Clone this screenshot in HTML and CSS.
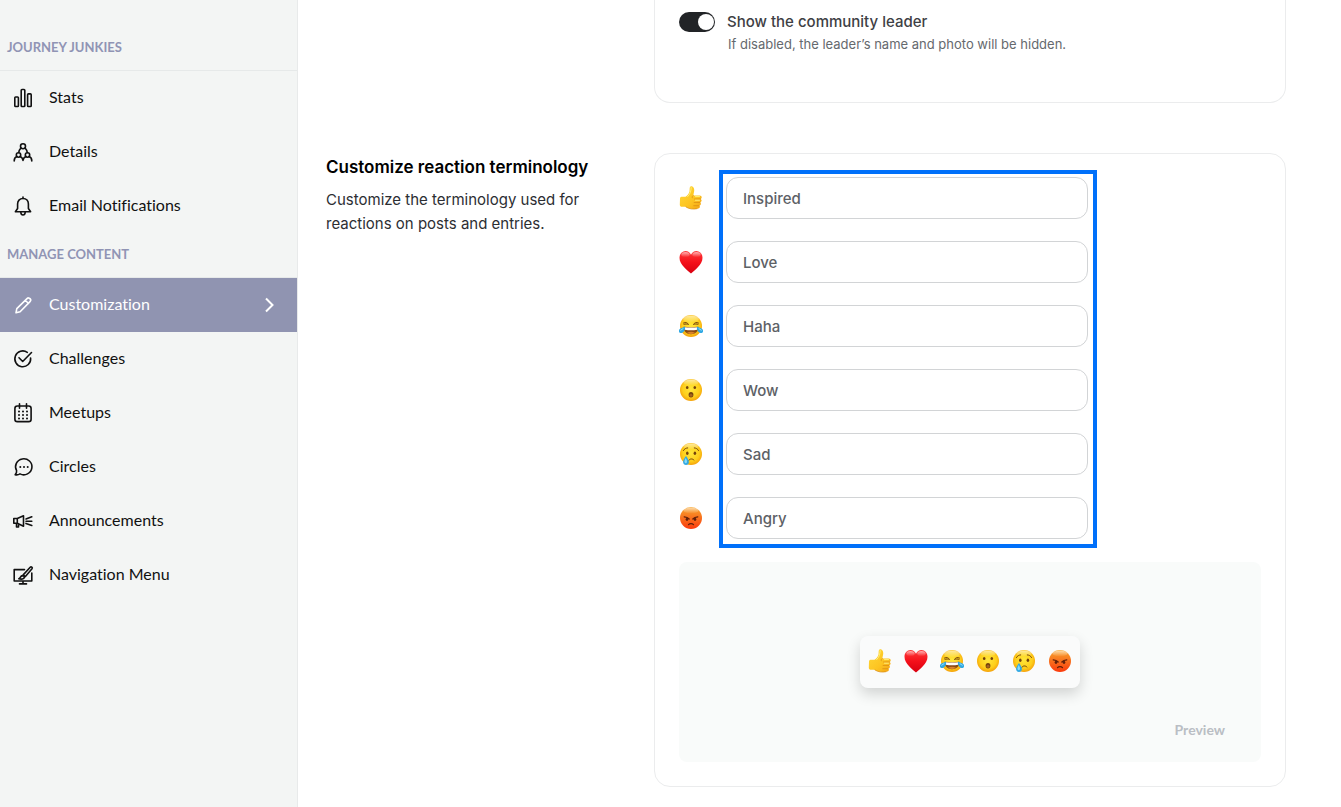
FILE: index.html
```html
<!DOCTYPE html>
<html lang="en">
<head>
<meta charset="utf-8">
<meta name="viewport" content="width=device-width, initial-scale=1">
<title>Customization</title>
<link rel="stylesheet" href="styles.css">
</head>
<body>
<svg class="sprite" aria-hidden="true">
  <defs>
    <radialGradient id="face" cx=".5" cy=".45" r=".58"><stop offset="0" stop-color="#ffe63c"/><stop offset=".65" stop-color="#fecf1b"/><stop offset="1" stop-color="#f39a08"/></radialGradient>
    <linearGradient id="gloss" x2="0" y2="1"><stop offset="0" stop-color="#fff" stop-opacity=".6"/><stop offset="1" stop-color="#fff" stop-opacity="0"/></linearGradient>
    <linearGradient id="mad" x2="0" y2="1"><stop offset="0" stop-color="#f8a62c"/><stop offset=".5" stop-color="#f8701e"/><stop offset="1" stop-color="#fb3a0c"/></linearGradient>
    <linearGradient id="hand" x2="1" y2="1"><stop offset="0" stop-color="#ffd93b"/><stop offset=".6" stop-color="#fdc421"/><stop offset="1" stop-color="#f3a316"/></linearGradient>
    <linearGradient id="red" x2="0" y2="1"><stop offset="0" stop-color="#ff3b3b"/><stop offset=".5" stop-color="#f4101a"/><stop offset="1" stop-color="#d80010"/></linearGradient>
  </defs>
  <symbol id="like" viewBox="0 0 24 24">
    <path fill="url(#hand)" d="M1 12.500C1 11.200 2 10.800 3.500 10.800h3C8.500 9.700 10 7.600 10.500 5.500L10.700 2C10.900.2 12.200-.2 13.400.4c1.900 1 2.100 3.700 1.600 5.600l-.7 3.500h6.300c2.500 0 2.700 2.800 1 3.500 1.500.7 1.300 3-.4 3.400 1.200.8.800 2.800-.7 3.200.8 1 .2 2.600-1.200 2.900-3.600.8-7.500.9-10.500-.5L6.500 20.800H3.300C1.500 20.800.8 20 .8 18.500z"/>
    <path fill="none" stroke="#d98b12" stroke-width=".7" stroke-linecap="round" d="M14.300 9.500c-1 .3-1.500 1.500-.9 2.400M15.500 13h6M15.200 16.500h5.600M14.800 19.700h5M7 21c3 2 7 2.600 11 1.700"/>
    <path fill="none" stroke="#ffef7a" stroke-width="1" stroke-linecap="round" d="M12.200 1.600c-.2 3-.6 6.200-3.500 9M16.500 10.600h4M16.500 14.200h4"/>
  </symbol>
  <symbol id="love" viewBox="0 0 24 24">
    <path fill="url(#red)" d="M12 23.500C8.500 20 .5 15 .5 7.700.5 4 3 1 6.500 1 9 1 11 2.500 12 4.800 13 2.500 15 1 17.500 1 21 1 23.500 4 23.500 7.700 23.500 15 15.500 20 12 23.500z"/>
    <ellipse cx="6.500" cy="4.600" rx="4.200" ry="2.600" fill="url(#gloss)"/><ellipse cx="17.500" cy="4.600" rx="4.200" ry="2.600" fill="url(#gloss)"/>
  </symbol>
  <symbol id="haha" viewBox="0 0 24 24">
    <circle cx="12" cy="12" r="11" fill="url(#face)"/><ellipse cx="12" cy="5" rx="8" ry="3.500" fill="url(#gloss)"/>
    <path fill="none" stroke="#76450d" stroke-width="1" stroke-linecap="round" stroke-linejoin="round" d="M4.500 9c2-1 4-.5 5 1.500-1.500-.6-3-.6-4.500-.2M19.500 9c-2-1-4-.5-5 1.500 1.500-.6 3-.6 4.500-.2"/>
    <path fill="#8a4a12" d="M4.500 12.800c5 .6 10 .6 15 0 0 4.800-3.200 7.400-7.500 7.400s-7.500-2.600-7.500-7.400z"/>
    <path fill="#fff" d="M5.400 13.200c4.500.5 8.700.5 13.200 0l-.5 2.600c-4 .7-8.200.7-12.200 0z"/>
    <path fill="#d9822b" d="M8 18.700c2.500-1.200 5.500-1.200 8 0-2.400 1.700-5.600 1.700-8 0z"/>
    <path fill="#32a9e4" d="M6 12.500c.6 3-1.200 6.500-4 6.500-2.400 0-2.700-2.700-1.200-4C2 13.900 4 13.700 6 12.500zM18 12.500c-.6 3 1.200 6.500 4 6.500 2.400 0 2.700-2.700 1.200-4-1.200-1.100-3.200-1.300-5.200-2.500z"/>
    <path fill="none" stroke="#94e0fb" stroke-width="1" stroke-linecap="round" d="M1.700 16.200l2.300-1.500M22.300 16.200L20 14.700"/>
  </symbol>
  <symbol id="wow" viewBox="0 0 24 24">
    <circle cx="12" cy="12" r="11" fill="url(#face)"/><ellipse cx="12" cy="4.500" rx="7.500" ry="3" fill="url(#gloss)"/>
    <g fill="#75430c"><ellipse cx="8.200" cy="9.500" rx="1.300" ry="1.600"/><ellipse cx="15.800" cy="9.500" rx="1.300" ry="1.600"/><ellipse cx="12" cy="16.800" rx="2.400" ry="2.700"/></g>
    <ellipse cx="12" cy="17.300" rx="1.500" ry="1.500" fill="#a5621d"/>
  </symbol>
  <symbol id="sad" viewBox="0 0 24 24">
    <circle cx="12" cy="12" r="11" fill="url(#face)"/><ellipse cx="12" cy="4.500" rx="7.500" ry="3" fill="url(#gloss)"/>
    <g fill="#75430c"><ellipse cx="8.300" cy="11.200" rx="1.300" ry="1.700"/><ellipse cx="15.900" cy="11.200" rx="1.300" ry="1.700"/></g>
    <path fill="none" stroke="#75430c" stroke-width="1" stroke-linecap="round" d="M4.500 8.500c1-1.800 2.500-2.500 4.200-2.600M19.500 8.500c-1-1.800-2.500-2.500-4.200-2.600M9.800 18.300c1.200-1.800 3.700-1.900 5.200-.2"/>
    <path fill="#32a9e4" d="M7 14c1.500 2.200 2.900 4.200 2.900 6 0 1.900-1.300 3-2.900 3s-2.900-1.100-2.900-3c0-1.800 1.300-3.800 2.900-6z"/>
    <path fill="#8adcf8" d="M6.800 16c.8 1.400 1.200 2.600 1.200 3.600 0 1-.6 1.600-1.200 1.600s-1.300-.6-1.300-1.600c0-1 .5-2.200 1.300-3.600z"/>
  </symbol>
  <symbol id="angry" viewBox="0 0 24 24">
    <circle cx="12" cy="12" r="11" fill="url(#mad)"/><ellipse cx="12" cy="4.500" rx="7.500" ry="3" fill="url(#gloss)"/>
    <g fill="#62200a"><ellipse cx="8" cy="13.300" rx="1.300" ry="1.600"/><ellipse cx="16" cy="13.300" rx="1.300" ry="1.600"/></g>
    <path fill="none" stroke="#62200a" stroke-width="1.200" stroke-linecap="round" d="M5.200 10.800c1.700.1 3.800.8 5 2.200M18.800 10.800c-1.700.1-3.800.8-5 2.200M9.500 18.700c1.200-1.400 3.800-1.400 5 0"/>
  </symbol>
</svg>

<div class="app">
  <aside class="sidebar">
    <nav>
      <h2 class="nav-title nav-title-first">JOURNEY JUNKIES</h2>
      <a class="nav-item" href="#stats"><svg class="icon" viewBox="0 0 20 20"><rect x="1.800" y="9" width="3.600" height="9.500" rx=".8"/><rect x="8.200" y="1.500" width="3.600" height="17" rx=".8"/><rect x="14.600" y="5.900" width="3.600" height="12.600" rx=".8"/></svg><span class="nav-label">Stats</span></a>
      <a class="nav-item" href="#details"><svg class="icon" viewBox="0 0 20 20"><circle cx="10" cy="4.200" r="2.500"/><circle cx="5.500" cy="13" r="2.200"/><circle cx="14.500" cy="13" r="2.200"/><path d="M7.900 6Q6 8 5.700 10.500M12.100 6Q14 8 14.300 10.500M1.200 19c0-2.600 1.200-4 2.800-4.500M7 14.500c1.700.5 2.800 2 3 4 .2-2 1.300-3.500 3-4M16 14.500c1.600.5 2.800 1.900 2.800 4.500"/></svg><span class="nav-label">Details</span></a>
      <a class="nav-item" href="#email"><svg class="icon" viewBox="0 0 20 20"><path d="M10 1v1.500M10 2.500C6.500 2.500 4.600 5 4.600 8v4.500L2.400 15.800h15.200l-2.200-3.300V8c0-3-1.900-5.500-5.400-5.500zM7.800 16.500c.2 1.700 1 2.500 2.200 2.500s2-.8 2.200-2.500"/></svg><span class="nav-label">Email Notifications</span></a>
      <h2 class="nav-title">MANAGE CONTENT</h2>
      <a class="nav-item nav-item-active" href="#customization" aria-current="page"><svg class="icon" viewBox="0 0 20 20"><path d="M3 17.800l.8-4.200L14 3.600c1-1 2.200-.8 3 0s1 2 0 3L7.100 16.800zM12.300 5.300l3.200 3.200"/></svg><span class="nav-label">Customization</span><svg class="chevron" viewBox="0 0 20 20"><path d="M7 3.500l6.500 6.500L7 16.500"/></svg></a>
      <a class="nav-item" href="#challenges"><svg class="icon" viewBox="0 0 20 20"><path d="M14.300 3.400A7.900 7.900 0 1 0 17.600 9M6 8.700l3.700 3.800 8.800-9"/></svg><span class="nav-label">Challenges</span></a>
      <a class="nav-item" href="#meetups"><svg class="icon" viewBox="0 0 20 20"><rect x="1.900" y="3" width="16.200" height="15.600" rx="2.400"/><path d="M6.500.8v4.400M13.500.8v4.400"/><path class="dots" d="M6 8.500h.01M10 8.500h.01M14 8.500h.01M6 12h.01M10 12h.01M14 12h.01M6 15.500h.01M10 15.500h.01M14 15.500h.01"/></svg><span class="nav-label">Meetups</span></a>
      <a class="nav-item" href="#circles"><svg class="icon" viewBox="0 0 20 20"><path d="M3.600 13.700A8.200 8 0 1 1 7 16.900c-1.600 1-3.300 1.200-4.800.8 1-.9 1.600-2.300 1.400-4z"/><path class="dots" d="M7.300 9.900h.01M11 9.900h.01M14.700 9.900h.01"/></svg><span class="nav-label">Circles</span></a>
      <a class="nav-item" href="#announcements"><svg class="icon" viewBox="0 0 20 20"><path d="M.8 7.500h3.500v4.800H.8zM4.300 7.500l6.200-2.700v10.400l-6.200-2.900M3.500 12.600v3.400h2v-2.900M13 8l5.800-2.200M13 10.200h5.800M13 12.400l5.800 2"/></svg><span class="nav-label">Announcements</span></a>
      <a class="nav-item" href="#menu"><svg class="icon" viewBox="0 0 20 20"><path d="M11.500 4.600H1.200V16h17.600V8M10 16v2.500M6.500 18.900h7M10.200 9.900l7-7.600c1-1 2.700.3 1.800 1.500l-6.600 7.800zM9.500 10.600c1.200 0 2 .9 1.800 1.900-.3 1.600-2.800 2-5.500 1.300 1.600-.5 1.500-3 3.700-3.200z"/></svg><span class="nav-label">Navigation Menu</span></a>
    </nav>
  </aside>

  <main class="content">
    <section class="setting">
      <div class="card card-continued">
        <label class="toggle">
          <input class="switch" type="checkbox" role="switch" checked aria-describedby="leader-hint">
          <span class="toggle-label">Show the community leader</span>
        </label>
        <p class="hint" id="leader-hint">If disabled, the leader’s name and photo will be hidden.</p>
      </div>
    </section>

    <section class="setting">
      <div class="intro">
        <h1 class="title">Customize reaction terminology</h1>
        <p class="description">Customize the terminology used for reactions on posts and entries.</p>
      </div>
      <div class="card">
        <div class="reactions">
          <label class="emoji-label" for="r-like"><svg class="emoji" role="img" aria-label="Thumbs up"><use href="#like"/></svg></label>
          <label class="emoji-label" for="r-love"><svg class="emoji" role="img" aria-label="Heart"><use href="#love"/></svg></label>
          <label class="emoji-label" for="r-haha"><svg class="emoji" role="img" aria-label="Tears of joy"><use href="#haha"/></svg></label>
          <label class="emoji-label" for="r-wow"><svg class="emoji" role="img" aria-label="Surprised face"><use href="#wow"/></svg></label>
          <label class="emoji-label" for="r-sad"><svg class="emoji" role="img" aria-label="Crying face"><use href="#sad"/></svg></label>
          <label class="emoji-label" for="r-angry"><svg class="emoji" role="img" aria-label="Angry face"><use href="#angry"/></svg></label>
          <div class="fields">
            <input class="field" id="r-like" type="text" value="Inspired">
            <input class="field" id="r-love" type="text" value="Love">
            <input class="field" id="r-haha" type="text" value="Haha">
            <input class="field" id="r-wow" type="text" value="Wow">
            <input class="field" id="r-sad" type="text" value="Sad">
            <input class="field" id="r-angry" type="text" value="Angry">
          </div>
        </div>
        <div class="preview">
          <div class="picker">
            <svg class="emoji"><use href="#like"/></svg>
            <svg class="emoji"><use href="#love"/></svg>
            <svg class="emoji"><use href="#haha"/></svg>
            <svg class="emoji"><use href="#wow"/></svg>
            <svg class="emoji"><use href="#sad"/></svg>
            <svg class="emoji"><use href="#angry"/></svg>
          </div>
          <span class="preview-caption">Preview</span>
        </div>
      </div>
    </section>
  </main>
</div>
</body>
</html>
```
FILE: styles.css
```css
* { box-sizing: border-box; }
body { margin: 0; background: #fff; font-family: Inter, Roboto, "Liberation Sans", sans-serif; color: #000; }
h1, h2, p { margin: 0; }
.sprite { position: absolute; width: 0; height: 0; }

.app { display: flex; min-height: 100vh; }

.sidebar { flex: 0 0 298px; background: #f3f5f4; border-right: 1px solid #e8eaea; font-family: Lato, "Liberation Sans", sans-serif; font-variant-ligatures: none; }
.nav-title { padding: 11px 7px 13px; border-bottom: 1px solid #e6e9e9; font-size: 13px; line-height: 20px; font-weight: 700; color: #9094b4; }
.nav-title-first { padding-top: 37px; }
.nav-item { display: flex; align-items: center; gap: 16px; height: 54px; padding: 0 18px 0 13px; font-size: 16px; line-height: 24px; color: #111; text-decoration: none; }
.nav-item-active { background: #9094b1; color: #fff; }
.nav-label { padding-bottom: 2px; }
.icon { width: 20px; height: 20px; fill: none; stroke: currentColor; stroke-width: 1.600; stroke-linejoin: round; stroke-linecap: round; overflow: visible; }
.icon .dots { stroke-width: 2; }
.chevron { width: 20px; height: 20px; margin-left: auto; fill: none; stroke: currentColor; stroke-width: 2; }

.content { flex: 1; min-width: 0; display: flex; flex-direction: column; gap: 50px; padding: 0 55px 20px 28px; }
.setting { display: grid; grid-template-columns: 304px 1fr; column-gap: 24px; }
.card { grid-column: 2; padding: 23px 24px 24px; border: 1px solid #ebeced; border-radius: 16px; }
.card-continued { padding: 10px 24px 48px; border-top: 0; border-radius: 0 0 16px 16px; }

.toggle { display: flex; align-items: center; gap: 12px; }
.toggle-label { font-size: 15px; line-height: 24px; font-weight: 500; color: #3e4044; }
.switch { appearance: none; display: flex; justify-content: flex-end; width: 36px; height: 20px; margin: 0; padding: 2px 1px; border-radius: 10px; background: #222427; }
.switch::after { content: ""; width: 16px; height: 16px; border-radius: 50%; background: #fff; }
.hint { padding-left: 49px; font-size: 13px; line-height: 20px; color: #65696e; }

.intro { padding-top: 2px; }
.title { font-size: 17px; line-height: 24px; font-weight: 600; color: #000; }
.description { padding-top: 9px; font-size: 15px; line-height: 24px; color: #2c2e33; }

.reactions { display: grid; grid-template-columns: 24px 362px; grid-template-rows: repeat(6, 42px); gap: 22px 23px; }
.emoji-label { grid-column: 1; display: flex; align-items: center; }
.emoji { width: 24px; height: 24px; display: block; }
.fields { grid-column: 2; grid-row: 1 / -1; position: relative; display: flex; flex-direction: column; gap: 22px; }
.fields::after { content: ""; position: absolute; inset: -7px -9px -9px -7px; border: 4px solid #0070fa; pointer-events: none; }
.field { width: 100%; height: 42px; padding: 0 16px; border: 1px solid #d2d4d6; border-radius: 12px; background: #fff; font: 500 15px/24px Inter, Roboto, "Liberation Sans", sans-serif; color: #5d6166; outline: 0; }

.preview { display: grid; grid-template-rows: 1fr auto 1fr; height: 200px; margin-top: 23px; padding: 0 36px 0; border-radius: 8px; background: #f9fbfa; }
.picker { grid-row: 2; justify-self: center; display: flex; gap: 12px; padding: 13px 8px 15px; border-radius: 8px; background: #fafbfb; box-shadow: 0 6px 14px rgba(0, 0, 0, .16); }
.preview-caption { grid-row: 3; align-self: end; justify-self: end; padding-bottom: 22px; font: 700 14px/20px Lato, sans-serif; color: #babec4; }
```
